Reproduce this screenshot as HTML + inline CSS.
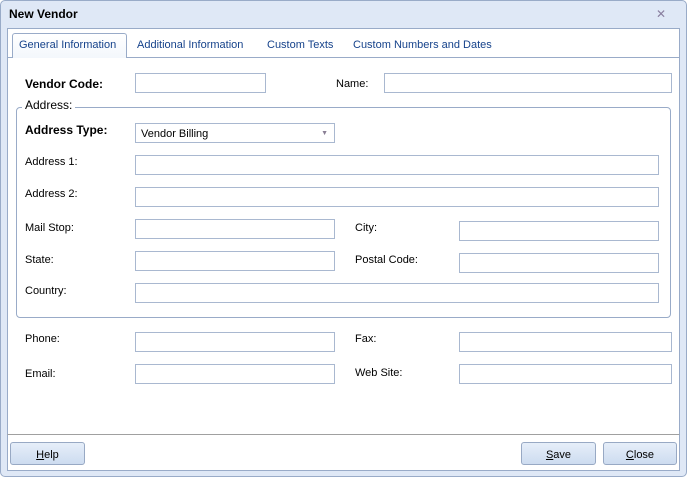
<!DOCTYPE html>
<html><head><style>
*{margin:0;padding:0;box-sizing:border-box}
body{width:687px;height:477px;background:#fff;font-family:"Liberation Sans",sans-serif;font-size:11px;color:#000;position:relative;overflow:hidden}
.win{position:absolute;left:0;top:0;width:687px;height:477px;background:#dfe8f6;border:1px solid #99abc8;border-radius:5px}
.abs{position:absolute}
.inp{position:absolute;height:20px;border:1px solid #a9b8d0;background:#fff}
.lbl{position:absolute;font-size:11px;line-height:13px}
.b{font-weight:bold;font-size:12px}
.btn{position:absolute;height:23px;border:1px solid #98a9c4;border-radius:3px;background:linear-gradient(#e6eef9,#cddcf0);text-align:center;line-height:24px;font-size:11px}
</style></head><body>
<div class="win"></div>
<div class="abs" style="left:9px;top:7px;font-weight:bold;font-size:12px">New Vendor</div>
<div class="abs" style="left:656px;top:7px;color:#8a7fa0;font-size:12px">✕</div>
<div class="abs" style="left:7px;top:28px;width:673px;height:407px;background:#fff;border:1px solid #99abc8"></div>
<div class="abs" style="left:8px;top:57px;width:671px;height:1px;background:#99abc8"></div>
<div class="abs" style="left:12px;top:33px;width:115px;height:25px;background:#fff;border:1px solid #99abc8;border-bottom:none;border-radius:3px 3px 0 0;background:linear-gradient(#fff,#f3f7fc)"></div>
<div class="lbl" style="left:19px;top:39px;color:#15428b">General Information</div>
<div class="lbl" style="left:137px;top:39px;color:#15428b">Additional Information</div>
<div class="lbl" style="left:267px;top:39px;color:#15428b">Custom Texts</div>
<div class="lbl" style="left:353px;top:39px;color:#15428b">Custom Numbers and Dates</div>

<div class="lbl b" style="left:25px;top:78px">Vendor Code:</div>
<div class="inp" style="left:135px;top:73px;width:131px"></div>
<div class="lbl" style="left:336px;top:78px">Name:</div>
<div class="inp" style="left:384px;top:73px;width:288px"></div>

<div class="abs" style="left:16px;top:107px;width:655px;height:211px;border:1px solid #99abc8;border-radius:4px"></div>
<div class="lbl" style="left:22px;top:99px;background:#fff;padding:0 3px;font-size:12px">Address:</div>
<div class="lbl b" style="left:25px;top:124px">Address Type:</div>
<div class="inp" style="left:135px;top:123px;width:200px;line-height:20px;padding-left:5px">Vendor Billing<span style="position:absolute;right:6px;top:0;color:#8a7f95;font-size:7px">▼</span></div>
<div class="lbl" style="left:25px;top:156px">Address 1:</div>
<div class="inp" style="left:135px;top:155px;width:524px"></div>
<div class="lbl" style="left:25px;top:188px">Address 2:</div>
<div class="inp" style="left:135px;top:187px;width:524px"></div>
<div class="lbl" style="left:25px;top:222px">Mail Stop:</div>
<div class="inp" style="left:135px;top:219px;width:200px"></div>
<div class="lbl" style="left:355px;top:222px">City:</div>
<div class="inp" style="left:459px;top:221px;width:200px"></div>
<div class="lbl" style="left:25px;top:254px">State:</div>
<div class="inp" style="left:135px;top:251px;width:200px"></div>
<div class="lbl" style="left:355px;top:254px">Postal Code:</div>
<div class="inp" style="left:459px;top:253px;width:200px"></div>
<div class="lbl" style="left:25px;top:285px">Country:</div>
<div class="inp" style="left:135px;top:283px;width:524px"></div>

<div class="lbl" style="left:25px;top:333px">Phone:</div>
<div class="inp" style="left:135px;top:332px;width:200px"></div>
<div class="lbl" style="left:355px;top:333px">Fax:</div>
<div class="inp" style="left:459px;top:332px;width:213px"></div>
<div class="lbl" style="left:25px;top:368px">Email:</div>
<div class="inp" style="left:135px;top:364px;width:200px"></div>
<div class="lbl" style="left:355px;top:367px">Web Site:</div>
<div class="inp" style="left:459px;top:364px;width:213px"></div>

<div class="abs" style="left:7px;top:434px;width:673px;height:37px;background:#fff;border:1px solid #99abc8;border-top:1px solid #a0a0a0"></div>
<div class="btn" style="left:10px;top:442px;width:75px"><u>H</u>elp</div>
<div class="btn" style="left:521px;top:442px;width:75px"><u>S</u>ave</div>
<div class="btn" style="left:603px;top:442px;width:74px"><u>C</u>lose</div>
</body></html>
